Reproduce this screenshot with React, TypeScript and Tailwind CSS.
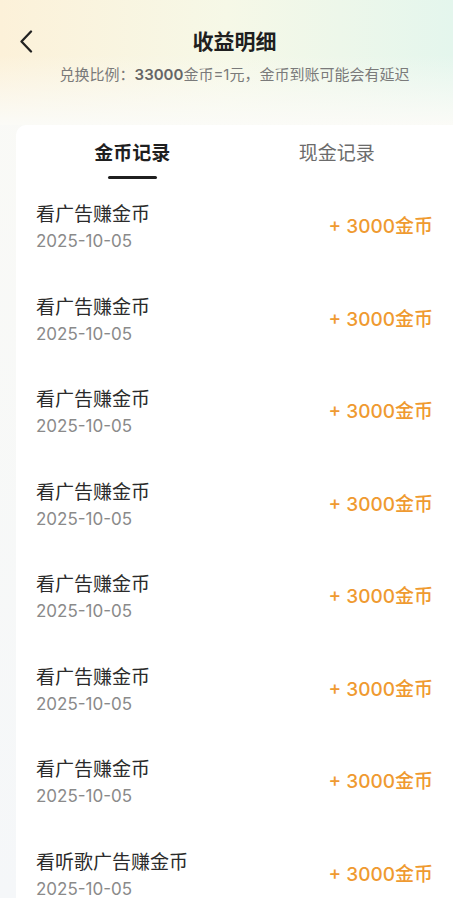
const records = [
  { title: "看广告赚金币", date: "2025-10-05", amount: 3000 },
  { title: "看广告赚金币", date: "2025-10-05", amount: 3000 },
  { title: "看广告赚金币", date: "2025-10-05", amount: 3000 },
  { title: "看广告赚金币", date: "2025-10-05", amount: 3000 },
  { title: "看广告赚金币", date: "2025-10-05", amount: 3000 },
  { title: "看广告赚金币", date: "2025-10-05", amount: 3000 },
  { title: "看广告赚金币", date: "2025-10-05", amount: 3000 },
  { title: "看听歌广告赚金币", date: "2025-10-05", amount: 3000 },
];

const font = "font-['Inter','Noto_Sans_CJK_SC',sans-serif]";

export default function App() {
  return (
    <div className={`${font} relative w-[453px] h-[898px] overflow-hidden bg-gradient-to-b from-[#fafaf6] to-[#f5f7f9]`}>
      {/* Gradient header */}
      <div className="relative h-[125px] bg-gradient-to-r from-[#fcf1d9] via-[#f6f8e7] to-[#e4f6ed]">
        <div className="absolute inset-x-0 bottom-0 h-[70px] bg-gradient-to-b from-transparent to-[#fbfbf7]" />
        <button className="absolute left-[19px] top-[30px]">
          <svg width="15" height="23" viewBox="0 0 15 23" fill="none">
            <polyline
              points="12,1.5 2.5,11.5 12,21.5"
              stroke="#222"
              strokeWidth="2.3"
              strokeLinecap="round"
              strokeLinejoin="round"
            />
          </svg>
        </button>

        <div className="relative flex flex-col items-center pl-4 pt-[28px]">
          <h1 className="text-[21px] leading-[28px] font-bold text-[#1f1f1f]">收益明细</h1>
          <p className="mt-[9px] text-[15px] leading-[20px] text-[#7a7a7a]">
            兑换比例：<span className="font-semibold text-[#666]">33000</span>金币=1元，金币到账可能会有延迟
          </p>
        </div>
      </div>

      {/* Card */}
      <div className="ml-4 bg-white rounded-tl-[10px] h-full">
        {/* Tabs */}
        <div className="flex px-[14px] pt-[16px]">
          <div className="flex-1 flex flex-col items-center">
            <span className="text-[19px] leading-[26px] font-semibold text-[#1f1f1f]">金币记录</span>
            <span className="mt-[9px] w-[49px] h-[3px] rounded-full bg-[#1f1f1f]" />
          </div>
          <div className="flex-1 flex flex-col items-center">
            <span className="text-[19px] leading-[26px] text-[#6b6b6b]">现金记录</span>
          </div>
        </div>

        {/* List */}
        <div className="flex flex-col pt-[2px]">
          {records.map((r, i) => (
            <div key={i} className="h-[92.5px] flex items-center justify-between px-5">
              <div className="flex flex-col">
                <span className="text-[19px] leading-[26px] text-[#2b2b2b]">{r.title}</span>
                <span className="mt-[2px] text-[17px] leading-[22px] text-[#8a8a8a]">{r.date}</span>
              </div>
              <span className="text-[19px] leading-[26px] font-medium text-[#ef9a30]">
                + {r.amount}金币
              </span>
            </div>
          ))}
        </div>
      </div>
    </div>
  );
}
